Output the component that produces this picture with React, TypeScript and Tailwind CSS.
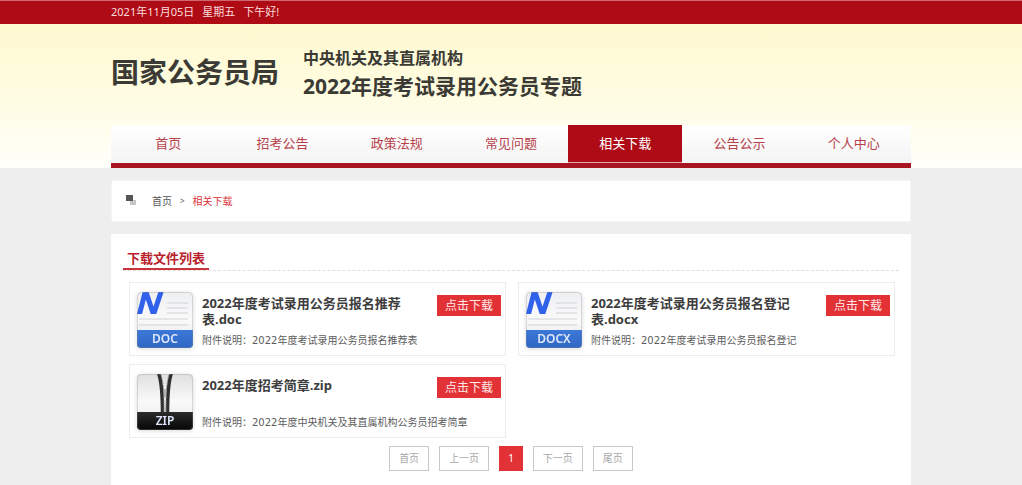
import React from 'react';
import clsx from 'clsx';

type FileKind = 'DOC' | 'DOCX' | 'ZIP';

const navItems = ['首页', '招考公告', '政策法规', '常见问题', '相关下载', '公告公示', '个人中心'];

const files: { kind: FileKind; name: string; note: string }[] = [
  { kind: 'DOC', name: '2022年度考试录用公务员报名推荐表.doc', note: '2022年度考试录用公务员报名推荐表' },
  { kind: 'DOCX', name: '2022年度考试录用公务员报名登记表.docx', note: '2022年度考试录用公务员报名登记' },
  { kind: 'ZIP', name: '2022年度招考简章.zip', note: '2022年度中央机关及其直属机构公务员招考简章' },
];

const pages = ['首页', '上一页', '1', '下一页', '尾页'];

const FileIcon = ({ kind }: { kind: FileKind }) => {
  const zip = kind === 'ZIP';
  return (
    <svg viewBox="0 0 58 58" className="w-[58px] h-[58px] shrink-0 drop-shadow-sm" role="img" aria-label={kind}>
      <defs>
        <linearGradient id={`paper-${kind}`} x1="0" y1="0" x2="0" y2="1">
          <stop offset="0" stopColor={zip ? '#e0e0e0' : '#eeeff2'} />
          <stop offset="0.5" stopColor="#fafafa" />
          <stop offset="1" stopColor="#e2e2e4" />
        </linearGradient>
        <linearGradient id={`band-${kind}`} x1="0" y1="0" x2="0" y2="1">
          <stop offset="0" stopColor={zip ? '#2c2c2c' : '#3c78d8'} />
          <stop offset="1" stopColor={zip ? '#050505' : '#2f66c4'} />
        </linearGradient>
        <clipPath id={`sheet-${kind}`}>
          <rect x="1" y="1" width="56" height="56" rx="4" />
        </clipPath>
        <clipPath id={`mark-${kind}`}>
          <rect x="1" y="1" width="30" height="22" />
        </clipPath>
      </defs>
      <g clipPath={`url(#sheet-${kind})`}>
        <rect x="1" y="1" width="56" height="56" fill={`url(#paper-${kind})`} />
        {zip ? (
          <g fill="none">
            <path d="M22.5 0C25.5 8 26.5 18 26.5 41M35.5 0C32.5 8 31.5 18 31.5 41" stroke="#303030" strokeWidth="3.5" />
            <path d="M24.5 0C28 10 28 20 28 41M33.5 0C30 10 30 20 30 41" stroke="#8c8c8c" strokeWidth="1" strokeDasharray="1.5 1" />
            <path d="M29 16v8" stroke="#b5b5b5" strokeWidth="2" />
          </g>
        ) : (
          <g fill="none">
            <path d="M31 12h21M31 17h21M31 22h21M3 28h49M3 34h49" stroke="#d1d2d5" strokeWidth="1" />
            <g clipPath={`url(#mark-${kind})`} stroke="#2f61ea" strokeWidth="5">
              <path d="M3 25L10 -2M9 -2L18 25M17 25L26 -2" />
            </g>
          </g>
        )}
        <rect x="1" y="39" width="56" height="18" fill={`url(#band-${kind})`} />
      </g>
      <rect x="1.5" y="1.5" width="55" height="55" rx="4" fill="none" stroke="#8a8a8a" strokeOpacity="0.3" />
      <text x="29" y="52" textAnchor="middle" fontSize="12" fontWeight="600" fill="#dfe8fa">
        {kind}
      </text>
    </svg>
  );
};

const Header = () => (
  <header className="bg-linear-to-b from-[#fff9d0] via-[#fffce2] to-[#fffffb]">
    <div className="max-w-[800px] mx-auto">
      <div className="flex items-center gap-6 pt-5 pb-[25px] text-[#3b3a35] font-bold">
        <div className="text-[28px] leading-14">国家公务员局</div>
        <h1>
          <span className="block text-[16px] leading-7 font-semibold">中央机关及其直属机构</span>
          <span className="block text-[21px] leading-7">2022年度考试录用公务员专题</span>
        </h1>
      </div>
      <nav className="grid grid-cols-7 h-[43px] border-b-5 border-[#a71520] bg-linear-to-b from-white to-[#f4f4f4] text-[13px]">
        {navItems.map((item) => (
          <a
            key={item}
            href="#"
            className={clsx(
              'flex items-center justify-center',
              item === '相关下载' ? 'bg-[#ae0b17] text-white border-b border-[#e8a3a6]' : 'text-[#b7414b]',
            )}
          >
            {item}
          </a>
        ))}
      </nav>
    </div>
  </header>
);

const Breadcrumb = () => (
  <div className="flex items-center bg-white rounded-xs border border-[#f5f5f5] h-[42px] px-3.5 text-[10px] text-[#555]">
    <svg viewBox="0 0 12 12" className="w-3 h-3 mr-3.5" aria-hidden="true">
      <rect x="4" y="5" width="6" height="5" fill="#c6c6c6" />
      <rect x="0" y="0" width="7" height="6" fill="#565656" />
    </svg>
    <a href="#">首页</a>
    <span className="mx-2 text-[8px]">&gt;</span>
    <a href="#" className="text-[#dc3438]">相关下载</a>
  </div>
);

export default function App() {
  return (
    <div className="min-h-screen bg-[#eeeeee] font-['Noto_Sans','Noto_Sans_CJK_SC',sans-serif]">
      <div className="h-6 bg-[#ae0b14] border-t border-[#cf6870] text-[#fbdcdc]">
        <div className="max-w-[800px] h-full mx-auto flex items-center gap-2 text-[11px]">
          <span>2021年11月05日</span>
          <span>星期五</span>
          <span>下午好!</span>
        </div>
      </div>

      <Header />

      <main className="max-w-[800px] mx-auto pt-3">
        <Breadcrumb />

        <section className="bg-white mt-3 pt-3.5 px-3 pb-[15px]">
          <div className="flex border-b border-dashed border-[#dedede]">
            <h2 className="px-1 border-b-2 border-[#c9343c] text-[13px] leading-5 font-bold text-[#b9222c]">
              下载文件列表
            </h2>
          </div>

          <ul className="grid grid-cols-2 gap-x-3 gap-y-2 pt-[11px] pl-1.5 pr-1">
            {files.map((file) => (
              <li key={file.kind} className="flex border border-[#ececec] h-[74px] pt-2 pl-1.5 pr-1">
                <FileIcon kind={file.kind} />
                <div className="flex flex-col ml-2 flex-1 h-14 pt-1">
                  <div className="flex justify-between">
                    <h3 className="w-[208px] text-[13px] leading-4 font-bold text-[#3d3d3d] break-all">{file.name}</h3>
                    <a href="#" className="bg-[#e23236] text-[#ffe9e9] text-[12px] w-16 h-[21px] flex items-center justify-center">
                      点击下载
                    </a>
                  </div>
                  <p className="mt-auto font-['DejaVu_Sans','Noto_Sans_CJK_SC',sans-serif] text-[10px] leading-3 text-[#5c5c5c]">
                    附件说明：{file.note}
                  </p>
                </div>
              </li>
            ))}
          </ul>

          <div className="flex justify-center gap-2.5 mt-2 text-[10px]">
            {pages.map((page) => (
              <button
                key={page}
                type="button"
                className={clsx(
                  'h-[25px] border',
                  page === '1' ? 'px-2 bg-[#e23236] border-[#e23236] text-white' : 'px-[9px] border-[#c8c8c8] text-[#a8a8a8]',
                )}
              >
                {page}
              </button>
            ))}
          </div>
        </section>
      </main>
    </div>
  );
}
